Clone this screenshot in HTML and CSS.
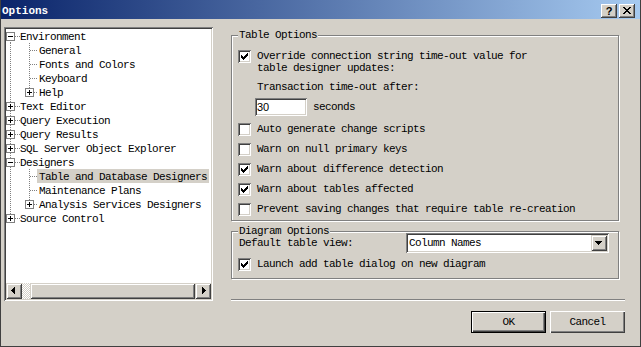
FILE: index.html
```html
<!DOCTYPE html>
<html lang="en">
<head>
  <meta charset="UTF-8">
  <title>Options</title>
  <link rel="stylesheet" href="styles.css">
</head>
<body>
  <div class="window">
    <!-- Title bar -->
    <div class="titlebar">
      <span class="title">Options</span>
      <span class="tbtn help">?</span>
      <span class="tbtn close">
        <svg width="16" height="14" viewBox="0 0 16 14"><path d="M4 3h2v1h-2zM10 3h2v1h-2zM5 4h2v1h-2zM9 4h2v1h-2zM6 5h4v1h-4zM7 6h2v1h-2zM6 7h4v1h-4zM5 8h2v1h-2zM9 8h2v1h-2zM4 9h2v1h-2zM10 9h2v1h-2z" fill="#000"/></svg>
      </span>
    </div>

    <div class="main">
      <!-- Tree -->
      <div class="tree">
        <div class="tree-list">
          <div class="row top-first"><span class="exp"></span><span class="label">Environment</span></div>
          <div class="row child"><span class="label leaf">General</span></div>
          <div class="row child"><span class="label leaf">Fonts and Colors</span></div>
          <div class="row child"><span class="label leaf">Keyboard</span></div>
          <div class="row child-last"><span class="exp plus sub"></span><span class="label">Help</span></div>
          <div class="row top"><span class="exp plus"></span><span class="label">Text Editor</span></div>
          <div class="row top"><span class="exp plus"></span><span class="label">Query Execution</span></div>
          <div class="row top"><span class="exp plus"></span><span class="label">Query Results</span></div>
          <div class="row top"><span class="exp plus"></span><span class="label">SQL Server Object Explorer</span></div>
          <div class="row top"><span class="exp"></span><span class="label">Designers</span></div>
          <div class="row child"><span class="label leaf sel">Table and Database Designers</span></div>
          <div class="row child"><span class="label leaf">Maintenance Plans</span></div>
          <div class="row child-last"><span class="exp plus sub"></span><span class="label">Analysis Services Designers</span></div>
          <div class="row top-last"><span class="exp plus"></span><span class="label">Source Control</span></div>
        </div>
        <div class="hscroll">
          <span class="sbtn"><svg width="16" height="16" viewBox="0 0 16 16"><path d="M5 7h1v1h-1zM6 6h1v3h-1zM7 5h1v5h-1zM8 4h1v7h-1z" fill="#000"/></svg></span>
          <span class="track"></span>
          <span class="thumb"></span>
          <span class="sbtn"><svg width="16" height="16" viewBox="0 0 16 16"><path d="M7 4h1v7h-1zM8 5h1v5h-1zM9 6h1v3h-1zM10 7h1v1h-1z" fill="#000"/></svg></span>
        </div>
      </div>

      <!-- Option pages -->
      <div class="side">
        <div class="group table-opts">
          <div class="group-title">Table Options</div>
          <div class="check-row first">
            <span class="cb"><svg width="13" height="13" viewBox="0 0 13 13"><path d="M3 5h1v3h-1zM4 6h1v3h-1zM5 7h1v3h-1zM6 6h1v3h-1zM7 5h1v3h-1zM8 4h1v3h-1zM9 3h1v3h-1z" fill="#000"/></svg></span>
            <span>Override connection string time-out value for<br>table designer updates:</span>
          </div>
          <div class="sub-label">Transaction time-out after:</div>
          <div class="timeout">
            <span class="field">30</span>
            <span>seconds</span>
          </div>
          <div class="check-row spaced">
            <span class="cb"></span>
            <span>Auto generate change scripts</span>
          </div>
          <div class="check-row spaced">
            <span class="cb"></span>
            <span>Warn on null primary keys</span>
          </div>
          <div class="check-row spaced">
            <span class="cb"><svg width="13" height="13" viewBox="0 0 13 13"><path d="M3 5h1v3h-1zM4 6h1v3h-1zM5 7h1v3h-1zM6 6h1v3h-1zM7 5h1v3h-1zM8 4h1v3h-1zM9 3h1v3h-1z" fill="#000"/></svg></span>
            <span>Warn about difference detection</span>
          </div>
          <div class="check-row spaced">
            <span class="cb"><svg width="13" height="13" viewBox="0 0 13 13"><path d="M3 5h1v3h-1zM4 6h1v3h-1zM5 7h1v3h-1zM6 6h1v3h-1zM7 5h1v3h-1zM8 4h1v3h-1zM9 3h1v3h-1z" fill="#000"/></svg></span>
            <span>Warn about tables affected</span>
          </div>
          <div class="check-row spaced">
            <span class="cb"></span>
            <span>Prevent saving changes that require table re-creation</span>
          </div>
        </div>

        <div class="group diagram-opts">
          <div class="group-title tight">Diagram Options</div>
          <div class="view-row">
            <span class="view-label">Default table view:</span>
            <span class="select">
              <span class="select-text">Column Names</span>
              <span class="sbtn"><svg width="16" height="16" viewBox="0 0 16 16"><path d="M4 6h7v1h-7zM5 7h5v1h-5zM6 8h3v1h-3zM7 9h1v1h-1z" fill="#000"/></svg></span>
            </span>
          </div>
          <div class="check-row launch">
            <span class="cb"><svg width="13" height="13" viewBox="0 0 13 13"><path d="M3 5h1v3h-1zM4 6h1v3h-1zM5 7h1v3h-1zM6 6h1v3h-1zM7 5h1v3h-1zM8 4h1v3h-1zM9 3h1v3h-1z" fill="#000"/></svg></span>
            <span>Launch add table dialog on new diagram</span>
          </div>
        </div>

        <div class="separator"></div>

        <div class="buttons">
          <span class="btn default">OK</span>
          <span class="btn">Cancel</span>
        </div>
      </div>
    </div>
  </div>
</body>
</html>
```

FILE: styles.css
```css
/* General */
body {
  margin: 0;
  background: #d4d0c8;
  font-family: "Liberation Mono", "DejaVu Sans Mono", monospace;
  font-size: 11px;
  letter-spacing: -0.6px;
  color: #000;
}
.window {
  width: 641px;
  height: 347px;
  box-sizing: border-box;
  background: #d4d0c8;
  border: 1px solid #404040;
  border-top: 0;
}

/* Title bar */
.titlebar {
  height: 19px;
  display: flex;
  align-items: center;
  padding: 0 5px 0 1px;
  background: linear-gradient(to right, #0a246a, #a6caf0);
}
.title {
  flex: 1;
  color: #fff;
  font-weight: bold;
  letter-spacing: 0;
  margin-top: 3px;
}
.tbtn {
  width: 16px;
  height: 14px;
  margin-left: 2px;
  margin-top: 3px;
  background: #d4d0c8;
  box-shadow: inset -1px -1px #404040, inset 1px 1px #fff, inset -2px -2px #808080;
  display: flex;
  justify-content: center;
  align-items: center;
  font-family: "Liberation Sans", Arial, sans-serif;
  font-weight: bold;
  font-size: 11px;
  letter-spacing: 0;
  line-height: 14px;
}

/* Layout */
.main {
  display: flex;
  padding: 8px 0 0 3px;
}

/* Tree view */
.tree {
  width: 209px;
  height: 274px;
  box-sizing: border-box;
  padding: 2px;
  background: #fff;
  box-shadow: inset 1px 1px #808080, inset -1px -1px #fff, inset 2px 2px #404040, inset -2px -2px #d4d0c8;
  display: flex;
  flex-direction: column;
}
.tree-list {
  flex: 1;
  overflow: hidden;
  --vd: repeating-linear-gradient(#808080 0 1px, transparent 1px 2px);
  --hd: repeating-linear-gradient(90deg, #808080 0 1px, transparent 1px 2px);
}
.row {
  height: 14px;
  display: flex;
  align-items: flex-start;
  white-space: nowrap;
  background-repeat: no-repeat;
}
.row.top-first {
  background-image: var(--vd), var(--hd);
  background-size: 1px 7px, 5px 1px;
  background-position: 4px 7px, 9px 7px;
}
.row.top {
  background-image: var(--vd), var(--hd);
  background-size: 1px 14px, 5px 1px;
  background-position: 4px 0, 9px 7px;
}
.row.top-last {
  background-image: var(--vd), var(--hd);
  background-size: 1px 8px, 5px 1px;
  background-position: 4px 0, 9px 7px;
}
.row.child {
  background-image: var(--vd), var(--vd), var(--hd);
  background-size: 1px 14px, 1px 14px, 8px 1px;
  background-position: 4px 0, 23px 0, 24px 7px;
}
.row.child-last {
  background-image: var(--vd), var(--vd), var(--hd);
  background-size: 1px 14px, 1px 8px, 8px 1px;
  background-position: 4px 0, 23px 0, 24px 7px;
}
.exp {
  flex: none;
  width: 9px;
  height: 9px;
  margin-top: 3px;
  box-sizing: border-box;
  border: 1px solid #808080;
  background: linear-gradient(#000, #000) center / 5px 1px no-repeat, #fff;
}
.exp.plus {
  background: linear-gradient(#000, #000) center / 5px 1px no-repeat,
              linear-gradient(#000, #000) center / 1px 5px no-repeat, #fff;
}
.exp.sub {
  margin-left: 19px;
}
.label {
  height: 14px;
  box-sizing: border-box;
  margin-left: 3px;
  padding: 2px 2px 0;
  line-height: 12px;
}
.label.leaf {
  margin-left: 31px;
}
.label.sel {
  background: #d4d0c8;
}

/* Scrollbar */
.hscroll {
  height: 16px;
  display: flex;
}
.sbtn, .thumb {
  background: #d4d0c8;
  box-shadow: inset 1px 1px #d4d0c8, inset -1px -1px #404040, inset 2px 2px #fff, inset -2px -2px #808080;
}
.sbtn {
  flex: none;
  width: 16px;
  height: 16px;
}
.sbtn svg {
  display: block;
}
.track {
  width: 8px;
  background: repeating-conic-gradient(#fff 0 25%, #d4d0c8 0 50%) 0 0 / 2px 2px;
}
.thumb {
  flex: 1;
}

/* Right side */
.side {
  margin-left: 18px;
  width: 394px;
  padding-top: 8px;
}
.group {
  width: 388px;
  box-sizing: border-box;
  border: 1px solid #808080;
  box-shadow: inset 1px 1px #fff, 1px 1px #fff;
  padding: 0 0 4px 6px;
}
.group-title {
  width: fit-content;
  margin-top: -7px;
  padding: 0 1px;
  line-height: 13px;
  background: #d4d0c8;
}
.group-title.tight {
  margin-bottom: -5px;
}
.diagram-opts {
  margin-top: 10px;
  padding-bottom: 7px;
}

.check-row {
  display: flex;
  align-items: flex-start;
  line-height: 12px;
}
.check-row.first {
  margin-top: 8px;
}
.check-row.spaced {
  margin-top: 7px;
}
.check-row.launch {
  margin-top: 5px;
}
.cb {
  flex: none;
  width: 13px;
  height: 13px;
  margin-right: 6px;
  background: #fff;
  box-shadow: inset 1px 1px #808080, inset -1px -1px #fff, inset 2px 2px #404040, inset -2px -2px #d4d0c8;
}
.cb svg {
  display: block;
}
.sub-label {
  margin-top: 7px;
  padding-left: 19px;
  line-height: 12px;
}
.timeout {
  display: flex;
  align-items: center;
  margin-top: 5px;
  padding-left: 17px;
  line-height: 18px;
}
.field, .select {
  background: #fff;
  box-shadow: inset 1px 1px #808080, inset -1px -1px #fff, inset 2px 2px #404040, inset -2px -2px #d4d0c8;
}
.field {
  width: 52px;
  height: 18px;
  box-sizing: border-box;
  padding-left: 2px;
  margin-right: 6px;
  font-family: "Liberation Sans", Arial, sans-serif;
  font-size: 11px;
  letter-spacing: 0;
}

.view-row {
  display: flex;
  align-items: center;
}
.view-label {
  width: 168px;
  padding-left: 1px;
  box-sizing: border-box;
}
.select {
  width: 203px;
  height: 20px;
  box-sizing: border-box;
  padding: 2px;
  display: flex;
  align-items: center;
}
.select-text {
  flex: 1;
  padding-left: 1px;
}

.separator {
  margin-top: 20px;
  border-top: 1px solid #808080;
  border-bottom: 1px solid #fff;
}
.buttons {
  display: flex;
  justify-content: flex-end;
  gap: 4px;
  margin-top: 10px;
}
.btn {
  width: 75px;
  height: 22px;
  line-height: 22px;
  text-align: center;
  background: #d4d0c8;
  box-shadow: inset 1px 1px #fff, inset -1px -1px #404040, inset -2px -2px #808080;
}
.btn.default {
  box-shadow: inset 0 0 0 1px #000, inset 2px 2px #fff, inset -2px -2px #404040, inset -3px -3px #808080;
}
```
